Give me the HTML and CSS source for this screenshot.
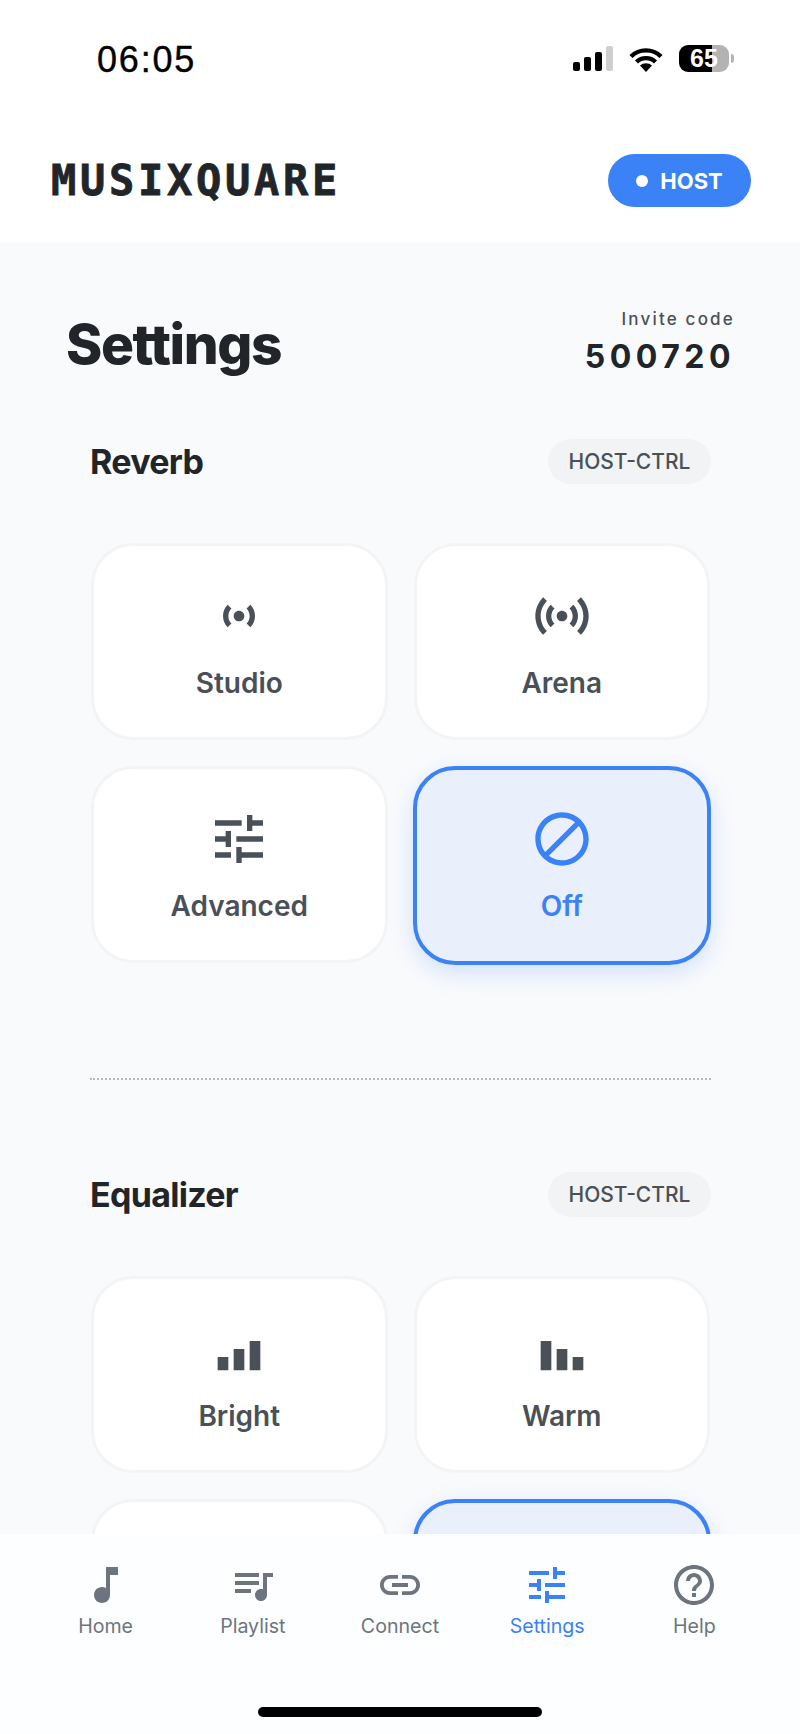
FILE: index.html
```html
<!DOCTYPE html>
<html lang="en">
<head>
    <meta charset="UTF-8">
    <meta name="viewport" content="width=device-width, initial-scale=1.0">
    <title>Musixquare Settings</title>
    <link rel="stylesheet" href="styles.css">
</head>
<body>
    <div class="phone">
        <header class="top">
            <div class="status-bar">
                <span class="clock">06:05</span>
                <div class="status-icons">
                    <div class="signal">
                        <span class="signal-bar bar-1"></span>
                        <span class="signal-bar bar-2"></span>
                        <span class="signal-bar bar-3"></span>
                        <span class="signal-bar bar-4"></span>
                    </div>
                    <svg class="wifi" viewBox="0 0 34 26">
                        <path d="M2 10.5a21.5 21.5 0 0 1 30 0M7.5 16a13.6 13.6 0 0 1 19 0" fill="none" stroke="#000" stroke-width="4.4"/>
                        <path d="M17 26l-6-6.4a8.6 8.6 0 0 1 12 0z" fill="#000"/>
                    </svg>
                    <div class="battery">
                        <div class="battery-body"><span class="battery-text">65</span></div>
                        <span class="battery-cap"></span>
                    </div>
                </div>
            </div>
            <div class="app-bar">
                <span class="logo">MUSIXQUARE</span>
                <div class="role-pill"><span class="role-dot"></span>HOST</div>
            </div>
        </header>

        <main class="content">
            <div class="title-row">
                <h1>Settings</h1>
                <div class="invite">
                    <div class="invite-label">Invite code</div>
                    <div class="invite-code">500720</div>
                </div>
            </div>

            <section class="group">
                <div class="group-head">
                    <h2>Reverb</h2>
                    <span class="ctrl-tag">HOST-CTRL</span>
                </div>
                <div class="options">
                    <div class="option">
                        <svg class="option-icon" viewBox="0 0 24 24"><path d="M7.76 16.24C6.67 15.16 6 13.66 6 12s.67-3.16 1.76-4.24l1.42 1.42C8.45 9.9 8 10.9 8 12c0 1.1.45 2.1 1.17 2.83l-1.41 1.41zm8.48 0C17.33 15.16 18 13.66 18 12s-.67-3.16-1.76-4.24l-1.42 1.42C15.55 9.9 16 10.9 16 12c0 1.1-.45 2.1-1.17 2.83l1.41 1.41zM12 10c-1.1 0-2 .9-2 2s.9 2 2 2 2-.9 2-2-.9-2-2-2z"/></svg>
                        <span>Studio</span>
                    </div>
                    <div class="option">
                        <svg class="option-icon" viewBox="0 0 24 24"><path d="M7.76 16.24C6.67 15.16 6 13.66 6 12s.67-3.16 1.76-4.24l1.42 1.42C8.45 9.9 8 10.9 8 12c0 1.1.45 2.1 1.17 2.83l-1.41 1.41zm8.48 0C17.33 15.16 18 13.66 18 12s-.67-3.16-1.76-4.24l-1.42 1.42C15.55 9.9 16 10.9 16 12c0 1.1-.45 2.1-1.17 2.83l1.41 1.41zM12 10c-1.1 0-2 .9-2 2s.9 2 2 2 2-.9 2-2-.9-2-2-2zm8 2c0 2.21-.9 4.21-2.35 5.65l1.42 1.42C20.88 17.26 22 14.76 22 12s-1.12-5.26-2.93-7.07l-1.42 1.42C19.1 7.79 20 9.79 20 12zM6.35 6.35L4.93 4.93C3.12 6.74 2 9.24 2 12s1.12 5.26 2.93 7.07l1.42-1.42C4.9 16.21 4 14.21 4 12s.9-4.21 2.35-5.65z"/></svg>
                        <span>Arena</span>
                    </div>
                    <div class="option">
                        <svg class="option-icon" viewBox="0 0 24 24"><path d="M3 17v2h6v-2H3zM3 5v2h10V5H3zm10 16v-2h8v-2h-8v-2h-2v6h2zM7 9v2H3v2h4v2h2V9H7zm14 4v-2H11v2h10zm-6-4h2V7h4V5h-4V3h-2v6z"/></svg>
                        <span>Advanced</span>
                    </div>
                    <div class="option selected">
                        <svg class="option-icon" viewBox="0 0 24 24"><path d="M12 2C6.48 2 2 6.48 2 12s4.48 10 10 10 10-4.48 10-10S17.52 2 12 2zM4 12c0-4.42 3.58-8 8-8 1.85 0 3.55.63 4.9 1.69L5.69 16.9C4.63 15.55 4 13.85 4 12zm8 8c-1.85 0-3.55-.63-4.9-1.69L18.31 7.1C19.37 8.45 20 10.15 20 12c0 4.42-3.58 8-8 8z"/></svg>
                        <span>Off</span>
                    </div>
                </div>
            </section>

            <div class="divider"></div>

            <section class="group">
                <div class="group-head">
                    <h2>Equalizer</h2>
                    <span class="ctrl-tag">HOST-CTRL</span>
                </div>
                <div class="options">
                    <div class="option">
                        <svg class="option-icon" viewBox="0 0 24 24"><path d="M4 15h4v5H4zM10 12h4v8h-4zM16 9h4v11h-4z"/></svg>
                        <span>Bright</span>
                    </div>
                    <div class="option">
                        <svg class="option-icon" viewBox="0 0 24 24"><path d="M4 9h4v11H4zM10 12h4v8h-4zM16 15h4v5h-4z"/></svg>
                        <span>Warm</span>
                    </div>
                    <div class="option"></div>
                    <div class="option selected"></div>
                </div>
            </section>
        </main>

        <nav class="bottom-nav">
            <div class="nav-items">
                <div class="nav-item">
                    <svg class="nav-icon" viewBox="0 0 24 24"><path d="M12 3v10.55c-.59-.34-1.27-.55-2-.55-2.21 0-4 1.79-4 4s1.79 4 4 4 4-1.79 4-4V7h4V3h-6z"/></svg>
                    <span>Home</span>
                </div>
                <div class="nav-item">
                    <svg class="nav-icon" viewBox="0 0 24 24"><path d="M15 6H3v2h12V6zm0 4H3v2h12v-2zM3 16h8v-2H3v2zM17 6v8.18c-.31-.11-.65-.18-1-.18-1.66 0-3 1.34-3 3s1.34 3 3 3 3-1.34 3-3V8h3V6h-5z"/></svg>
                    <span>Playlist</span>
                </div>
                <div class="nav-item">
                    <svg class="nav-icon" viewBox="0 0 24 24"><path d="M3.9 12c0-1.71 1.39-3.1 3.1-3.1h4V7H7c-2.76 0-5 2.24-5 5s2.24 5 5 5h4v-1.9H7c-1.71 0-3.1-1.39-3.1-3.1zM8 13h8v-2H8v2zm9-6h-4v1.9h4c1.71 0 3.1 1.39 3.1 3.1s-1.39 3.1-3.1 3.1h-4V17h4c2.76 0 5-2.24 5-5s-2.24-5-5-5z"/></svg>
                    <span>Connect</span>
                </div>
                <div class="nav-item active">
                    <svg class="nav-icon" viewBox="0 0 24 24"><path d="M3 17v2h6v-2H3zM3 5v2h10V5H3zm10 16v-2h8v-2h-8v-2h-2v6h2zM7 9v2H3v2h4v2h2V9H7zm14 4v-2H11v2h10zm-6-4h2V7h4V5h-4V3h-2v6z"/></svg>
                    <span>Settings</span>
                </div>
                <div class="nav-item">
                    <svg class="nav-icon" viewBox="0 0 24 24"><path d="M11 18h2v-2h-2v2zm1-16C6.48 2 2 6.48 2 12s4.48 10 10 10 10-4.48 10-10S17.52 2 12 2zm0 18c-4.41 0-8-3.59-8-8s3.59-8 8-8 8 3.59 8 8-3.59 8-8 8zm0-14c-2.21 0-4 1.79-4 4h2c0-1.1.9-2 2-2s2 .9 2 2c0 2-3 1.75-3 5h2c0-2.25 3-2.5 3-5 0-2.21-1.79-4-4-4z"/></svg>
                    <span>Help</span>
                </div>
            </div>
            <div class="home-indicator"></div>
        </nav>
    </div>
</body>
</html>
```

FILE: styles.css
```css
* {
    box-sizing: border-box;
}
html, body {
    margin: 0;
    padding: 0;
}
body {
    font-family: Inter, 'Noto Sans', sans-serif;
    background-color: #f9fafc;
    color: #212529;
}
.phone {
    width: 800px;
    height: 1734px;
    display: flex;
    flex-direction: column;
    overflow: hidden;
}

/* top area */
.top {
    height: 242px;
    flex-shrink: 0;
    background-color: #ffffff;
}
.status-bar {
    height: 118px;
    padding: 41px 66px 0 97px;
    display: flex;
    justify-content: space-between;
    align-items: flex-start;
}
.clock {
    font-family: 'Liberation Sans', Arial, sans-serif;
    font-size: 36px;
    line-height: 38px;
    letter-spacing: 1.8px;
    color: #000000;
    -webkit-text-stroke: 0.4px #000000;
}
.status-icons {
    display: flex;
    align-items: flex-end;
    gap: 16px;
    padding-top: 4px;
}
.signal {
    display: flex;
    align-items: flex-end;
    gap: 4px;
    height: 26px;
    margin-bottom: 1px;
}
.signal-bar {
    width: 7px;
    background-color: #000000;
    border-radius: 2px;
}
.bar-1 { height: 9px; }
.bar-2 { height: 14px; }
.bar-3 { height: 19px; }
.bar-4 { height: 25px; background-color: #cfcfcf; }
.wifi {
    width: 34px;
    height: 26px;
    display: block;
}
.battery {
    display: flex;
    align-items: center;
    gap: 2px;
}
.battery-body {
    width: 50px;
    height: 27px;
    border-radius: 9px;
    background: linear-gradient(to right, #000000 66%, #b3b3b3 66%);
    display: flex;
    align-items: center;
    justify-content: center;
}
.battery-text {
    font-family: 'Liberation Sans', Arial, sans-serif;
    font-weight: 700;
    font-size: 25px;
    color: #ffffff;
}
.battery-cap {
    width: 3px;
    height: 9px;
    border-radius: 0 3px 3px 0;
    background-color: #b3b3b3;
}
.app-bar {
    padding: 36px 49px 0 51px;
    display: flex;
    justify-content: space-between;
    align-items: center;
}
.logo {
    font-family: 'DejaVu Sans Mono', monospace;
    font-weight: 700;
    font-size: 42px;
    line-height: 53px;
    letter-spacing: 3.7px;
    color: #212529;
    -webkit-text-stroke: 0.8px #212529;
}
.role-pill {
    width: 143px;
    height: 53px;
    border-radius: 27px;
    background-color: #3b82f6;
    color: #ffffff;
    font-weight: 700;
    font-size: 22px;
    display: flex;
    align-items: center;
    justify-content: center;
    gap: 12px;
}
.role-dot {
    width: 12px;
    height: 12px;
    border-radius: 50%;
    background-color: #ffffff;
}

/* content */
.content {
    flex: 1;
    min-height: 0;
    overflow: hidden;
    padding: 64px 67px 0 66px;
}
.title-row {
    display: flex;
    justify-content: space-between;
    align-items: center;
    height: 72px;
}
h1 {
    margin: 4px 0 0;
    font-size: 55px;
    font-weight: 800;
    letter-spacing: -1.4px;
    color: #212529;
}
.invite {
    text-align: right;
    margin-right: -2px;
}
.invite-label {
    font-size: 17px;
    line-height: 22px;
    font-weight: 500;
    letter-spacing: 2.2px;
    color: #495057;
}
.invite-code {
    font-size: 32px;
    line-height: 38px;
    font-weight: 700;
    letter-spacing: 4.5px;
    color: #212529;
    margin-top: 8px;
}
.group {
    margin: 61px 22px 0 24px;
}
.group-head {
    display: flex;
    justify-content: space-between;
    align-items: center;
    height: 45px;
}
h2 {
    margin: 0;
    font-size: 34px;
    font-weight: 700;
    letter-spacing: -0.7px;
    color: #212529;
}
.ctrl-tag {
    width: 163px;
    height: 45px;
    border-radius: 23px;
    background-color: #f1f3f5;
    color: #495057;
    font-size: 21px;
    font-weight: 500;
    display: flex;
    align-items: center;
    justify-content: center;
}
.options {
    margin-top: 59px;
    padding: 0 1px;
    display: grid;
    grid-template-columns: 1fr 1fr;
    grid-auto-rows: 197px;
    gap: 26px;
}
.option {
    border: 3px solid #f3f4f6;
    border-radius: 42px;
    background-color: #ffffff;
    color: #495057;
    font-size: 28px;
    font-weight: 600;
    display: flex;
    flex-direction: column;
    align-items: center;
    padding-top: 38px;
}
.option-icon {
    width: 64px;
    height: 64px;
    fill: currentColor;
    margin-bottom: 18px;
}
.option.selected {
    border: 4px solid #3b82f6;
    background-color: #e9effb;
    color: #3b82f6;
    padding-top: 37px;
    margin: 0 -1px -2px -1px;
    box-shadow: 0 8px 24px rgba(59, 130, 246, 0.2);
}
.divider {
    margin: 115px 22px 0 24px;
    border-top: 2px dotted #b4b8bd;
}
.divider + .group {
    margin-top: 92px;
}

/* bottom navigation */
.bottom-nav {
    height: 200px;
    flex-shrink: 0;
    background-color: #fdfeff;
    display: flex;
    flex-direction: column;
    align-items: center;
}
.nav-items {
    width: 100%;
    padding: 27px 32px 0;
    display: grid;
    grid-template-columns: repeat(5, 1fr);
}
.nav-item {
    display: flex;
    flex-direction: column;
    align-items: center;
    color: #6c757d;
    font-size: 19.6px;
    line-height: 24px;
}
.nav-item.active {
    color: #3b82f6;
}
.nav-icon {
    width: 48px;
    height: 48px;
    fill: currentColor;
    margin-bottom: 5px;
}
.home-indicator {
    width: 284px;
    height: 10px;
    border-radius: 5px;
    background-color: #000000;
    margin-top: 69px;
}
```
